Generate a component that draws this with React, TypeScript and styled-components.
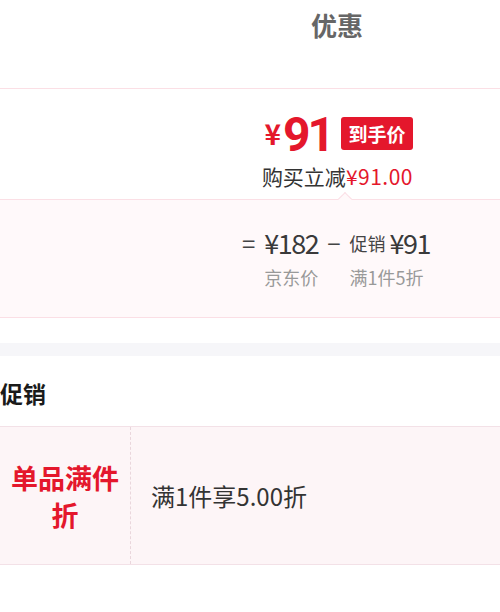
import React from 'react'
import styled, { createGlobalStyle } from 'styled-components'

const GlobalStyle = createGlobalStyle`
  html, body {
    margin: 0;
    padding: 0;
    background: #fff;
  }
  body {
    font-family: "Noto Sans CJK SC", "Noto Sans", sans-serif;
    color: #333;
  }
`

const RED = '#e4172c'

const Page = styled.div`
  width: 500px;
  height: 612px;
  overflow: hidden;
  background: #fff;
`

const Header = styled.div`
  height: 89px;
  box-sizing: border-box;
  display: flex;
  justify-content: center;
  padding: 6px 0 0 174px;
  border-bottom: 1px solid #fbdfe5;
`

const Title = styled.h2`
  margin: 0;
  font-size: 26px;
  line-height: 38px;
  font-weight: 700;
  color: #666;
`

const FinalPrice = styled.div`
  display: flex;
  flex-direction: column;
  align-items: flex-end;
  padding: 20px 87px 10px 0;
  height: 110px;
  box-sizing: border-box;
`

const PriceRow = styled.div`
  display: flex;
  align-items: center;
  height: 48px;
`

const Yen = styled.span`
  font-size: 28px;
  font-weight: 700;
  color: ${RED};
  line-height: 28px;
`

const BigNum = styled.span`
  font-family: "Roboto", "Noto Sans CJK SC", sans-serif;
  font-size: 48px;
  font-weight: 700;
  color: ${RED};
  line-height: 48px;
  letter-spacing: -3px;
  margin: 3px 0 0 2px;
`

const Badge = styled.span`
  margin-left: 9px;
  width: 72px;
  height: 33px;
  display: flex;
  align-items: center;
  justify-content: center;
  background: ${RED};
  color: #fff;
  border-radius: 3px;
  font-size: 19px;
  font-weight: 700;
`

const SaveLine = styled.div`
  margin-top: 6px;
  height: 26px;
  font-size: 21px;
  line-height: 26px;
  color: #333;
  white-space: nowrap;
`

const Red = styled.span`
  color: ${RED};
  letter-spacing: 0.5px;
`

const Breakdown = styled.div`
  position: relative;
  height: 119px;
  box-sizing: border-box;
  background: #fff9fa;
  border-top: 1px solid #fbdfe5;
  border-bottom: 1px solid #fbdfe5;
  display: flex;
  justify-content: flex-end;
  align-items: flex-start;
  gap: 9px;
  padding: 26px 70px 0 0;

  &::before {
    content: '';
    position: absolute;
    top: -6px;
    left: 340px;
    width: 9px;
    height: 9px;
    background: #fff9fa;
    border-top: 1px solid #fbdfe5;
    border-left: 1px solid #fbdfe5;
    transform: rotate(45deg);
  }
`

const Op = styled.span`
  font-size: 24px;
  line-height: 34px;
  color: #444;
`

const Term = styled.div`
  display: flex;
  flex-direction: column;
  align-items: flex-start;
  gap: 4px;
`

const TermValue = styled.div`
  display: flex;
  align-items: center;
  gap: 4px;
  height: 34px;
  white-space: nowrap;
`

const Amount = styled.span`
  font-size: 27px;
  line-height: 34px;
  color: #3a3a3a;
  letter-spacing: -1.5px;
`

const TermTag = styled.span`
  font-size: 18px;
  color: #444;
`

const TermLabel = styled.div`
  font-size: 18px;
  line-height: 26px;
  color: #999;
  white-space: nowrap;
`

const Gap = styled.div`
  height: 25px;
`

const Band = styled.div`
  height: 13px;
  background: #f6f6f9;
`

const PromoTitle = styled.h3`
  margin: 21px 0 17px 0;
  font-size: 23px;
  line-height: 32px;
  font-weight: 700;
  color: #1a1a1a;
`

const PromoTable = styled.div`
  display: grid;
  grid-template-columns: 131px 1fr;
  height: 139px;
  box-sizing: border-box;
  border-top: 1px solid #f3e1e7;
  border-bottom: 1px solid #f3e1e7;
  background: #fdf5f7;
`

const PromoType = styled.div`
  display: flex;
  align-items: center;
  justify-content: center;
  text-align: center;
  padding: 0 6px;
  border-right: 1px dashed #ead6dc;
  font-size: 27px;
  line-height: 37px;
  font-weight: 700;
  color: ${RED};
`

const PromoDesc = styled.div`
  display: flex;
  align-items: center;
  padding-left: 20px;
  font-size: 24px;
  color: #333;
`

export default function App() {
  return (
    <Page>
      <GlobalStyle />
      <Header>
        <Title>优惠</Title>
      </Header>

      <FinalPrice>
        <PriceRow>
          <Yen>¥</Yen>
          <BigNum>91</BigNum>
          <Badge>到手价</Badge>
        </PriceRow>
        <SaveLine>
          购买立减<Red>¥91.00</Red>
        </SaveLine>
      </FinalPrice>

      <Breakdown>
        <Op>=</Op>
        <Term>
          <TermValue>
            <Amount>¥182</Amount>
          </TermValue>
          <TermLabel>京东价</TermLabel>
        </Term>
        <Op>−</Op>
        <Term>
          <TermValue>
            <TermTag>促销</TermTag>
            <Amount>¥91</Amount>
          </TermValue>
          <TermLabel>满1件5折</TermLabel>
        </Term>
      </Breakdown>

      <Gap />
      <Band />

      <PromoTitle>促销</PromoTitle>
      <PromoTable>
        <PromoType>单品满件折</PromoType>
        <PromoDesc>满1件享5.00折</PromoDesc>
      </PromoTable>
    </Page>
  )
}
